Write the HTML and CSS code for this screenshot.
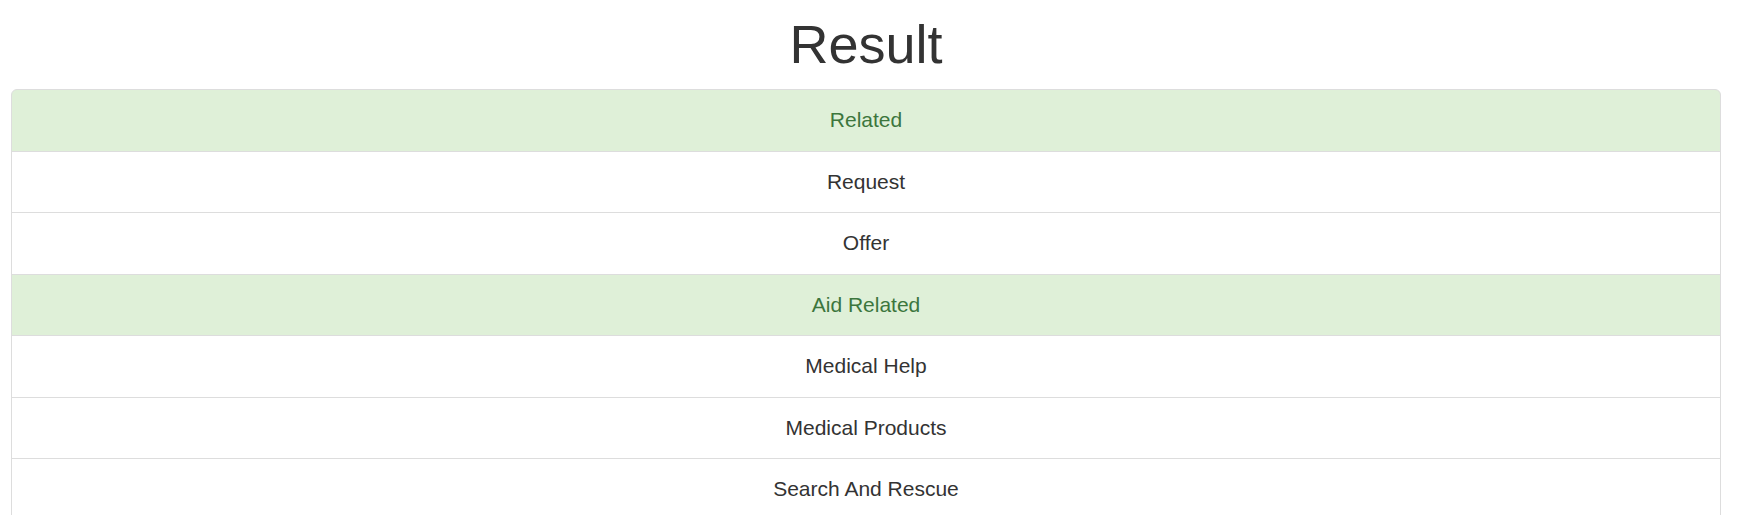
FILE: index.html
```html
<!DOCTYPE html>
<html>
<head>
<meta charset="utf-8">
<link rel="stylesheet" href="styles.css">
</head>
<body>
<div class="page">
  <h1 class="title">Result</h1>
  <ul class="list">
    <li class="item success">Related</li>
    <li class="item">Request</li>
    <li class="item">Offer</li>
    <li class="item success">Aid Related</li>
    <li class="item">Medical Help</li>
    <li class="item">Medical Products</li>
    <li class="item">Search And Rescue</li>
  </ul>
</div>
</body>
</html>
```
FILE: styles.css
```css
html, body {
  margin: 0;
  padding: 0;
  background: #fff;
}
body {
  font-family: "Liberation Sans", Arial, sans-serif;
  color: #333;
  font-size: 21px;
  line-height: 30px;
}
.page {
  margin: 0 29px 0 11px;
}
.title {
  margin: 15px 0 15px;
  font-size: 54px;
  font-weight: 500;
  line-height: 59px;
  text-align: center;
  color: #333;
}
.list {
  list-style: none;
  margin: 0;
  padding: 0;
}
.item {
  display: block;
  padding: 15px 22px;
  line-height: 30.5px;
  border: 1px solid #ddd;
  margin-bottom: -1px;
  background: #fff;
  text-align: center;
}
.item:first-child {
  border-top-left-radius: 6px;
  border-top-right-radius: 6px;
}
.item.success {
  background: #dff0d8;
  color: #3c763d;
}
```
